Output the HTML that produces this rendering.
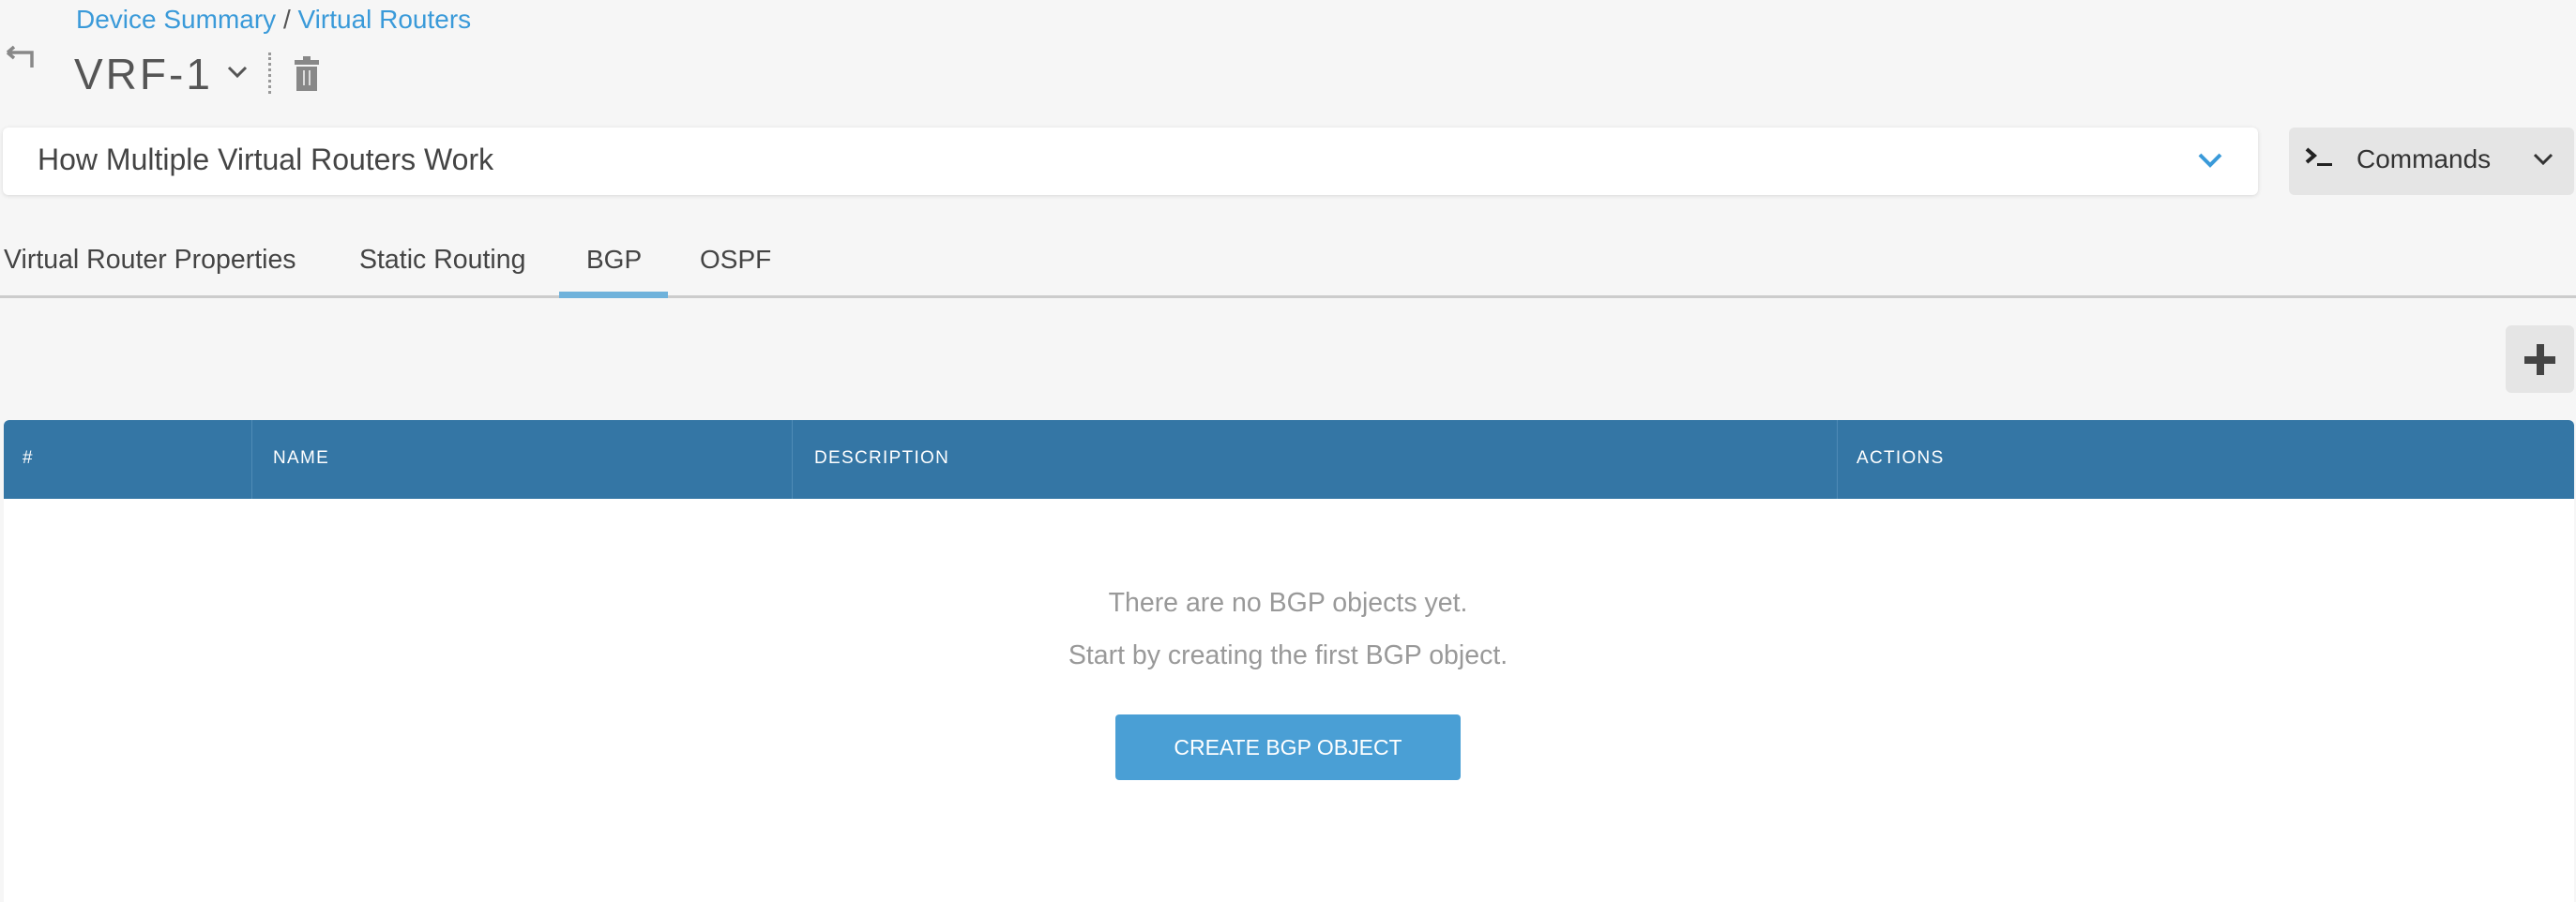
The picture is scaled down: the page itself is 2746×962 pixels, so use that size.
<!DOCTYPE html>
<html><head><meta charset="utf-8"><style>
*{margin:0;padding:0;box-sizing:border-box}
body{width:2746px;height:960px;background:#f6f6f6;font-family:"Liberation Sans",sans-serif;position:relative;overflow:hidden;color:#333}
.a{position:absolute}
</style></head><body>
<div class="a" style="left:81px;top:5px;font-size:28px;color:#3a9ad9;white-space:nowrap">Device Summary <span style="color:#555">/</span> Virtual Routers</div>
<svg class="a" style="left:4px;top:48px" width="36" height="28" viewBox="0 0 36 28"><path d="M4 8 L30 8 L30 24 M4 8 L11 2 M4 8 L11 14" fill="none" stroke="#888" stroke-width="3.5"/></svg>
<div class="a" style="left:79px;top:52px;font-size:46px;color:#555;letter-spacing:3px;font-weight:300">VRF-1</div>
<svg class="a" style="left:242px;top:70px" width="22" height="14"><path d="M2 2 L11 11 L20 2" fill="none" stroke="#555" stroke-width="3"/></svg>
<div class="a" style="left:286px;top:56px;width:0;height:44px;border-left:3px dotted #999"></div>
<svg class="a" style="left:312px;top:60px" width="30" height="38" viewBox="0 0 30 38"><rect x="11" y="0" width="8" height="4" fill="#888"/><rect x="2" y="4" width="26" height="5" fill="#888"/><rect x="4" y="11" width="22" height="26" fill="#888"/><rect x="11" y="15" width="2" height="16" fill="#ddd"/><rect x="17" y="15" width="2" height="16" fill="#ddd"/></svg>
<div class="a" style="left:3px;top:136px;width:2404px;height:72px;background:#fff;border-radius:6px;box-shadow:0 1px 5px rgba(0,0,0,.12)"></div>
<div class="a" style="left:40px;top:152px;font-size:32px;color:#444">How Multiple Virtual Routers Work</div>
<svg class="a" style="left:2343px;top:163px" width="26" height="16"><path d="M2 2 L13 13 L24 2" fill="none" stroke="#3a9ad9" stroke-width="4"/></svg>
<div class="a" style="left:2440px;top:136px;width:304px;height:72px;background:#e5e5e5;border-radius:6px"></div>
<svg class="a" style="left:2457px;top:157px" width="32" height="24"><path d="M2 2 L10 9 L2 16" fill="none" stroke="#222" stroke-width="4"/><rect x="13" y="17" width="16" height="3" fill="#222"/></svg>
<div class="a" style="left:2512px;top:154px;font-size:28px;color:#333">Commands</div>
<svg class="a" style="left:2700px;top:163px" width="22" height="14"><path d="M2 2 L11 11 L20 2" fill="none" stroke="#333" stroke-width="3"/></svg>
<div class="a" style="left:4px;top:261px;font-size:28.5px;color:#444">Virtual Router Properties</div>
<div class="a" style="left:383px;top:261px;font-size:28.5px;color:#444">Static Routing</div>
<div class="a" style="left:625px;top:261px;font-size:28px;color:#444">BGP</div>
<div class="a" style="left:746px;top:261px;font-size:28px;color:#444">OSPF</div>
<div class="a" style="left:0;top:315px;width:2746px;height:3px;background:#ccc"></div>
<div class="a" style="left:596px;top:311px;width:116px;height:7px;background:#6fb2db"></div>
<div class="a" style="left:2671px;top:347px;width:73px;height:72px;background:#e5e5e5;border-radius:6px"></div>
<svg class="a" style="left:2691px;top:367px" width="34" height="34"><rect x="0" y="13" width="33" height="8" fill="#444"/><rect x="13" y="0" width="8" height="33" fill="#444"/></svg>
<div class="a" style="left:4px;top:448px;width:2740px;height:84px;background:#3476a5;border-radius:6px 6px 0 0"></div>
<div class="a" style="left:268px;top:448px;width:1px;height:84px;background:#4f8bb6"></div>
<div class="a" style="left:844px;top:448px;width:1px;height:84px;background:#4f8bb6"></div>
<div class="a" style="left:1958px;top:448px;width:1px;height:84px;background:#4f8bb6"></div>
<div class="a" style="left:24px;top:478px;font-size:19px;color:#fff;letter-spacing:1.3px">#</div>
<div class="a" style="left:291px;top:478px;font-size:19px;color:#fff;letter-spacing:1.3px">NAME</div>
<div class="a" style="left:868px;top:478px;font-size:19px;color:#fff;letter-spacing:1.3px">DESCRIPTION</div>
<div class="a" style="left:1979px;top:478px;font-size:19px;color:#fff;letter-spacing:1.3px">ACTIONS</div>
<div class="a" style="left:4px;top:532px;width:2740px;height:430px;background:#fff"></div>
<div class="a" style="left:0;width:2746px;text-align:center;top:627px;font-size:28.5px;color:#999">There are no BGP objects yet.</div>
<div class="a" style="left:0;width:2746px;text-align:center;top:683px;font-size:28.5px;color:#999">Start by creating the first BGP object.</div>
<div class="a" style="left:1189px;top:762px;width:368px;height:70px;background:#4a9fd5;border-radius:4px;color:#fff;font-size:23px;text-align:center;line-height:70px">CREATE BGP OBJECT</div>
</body></html>
